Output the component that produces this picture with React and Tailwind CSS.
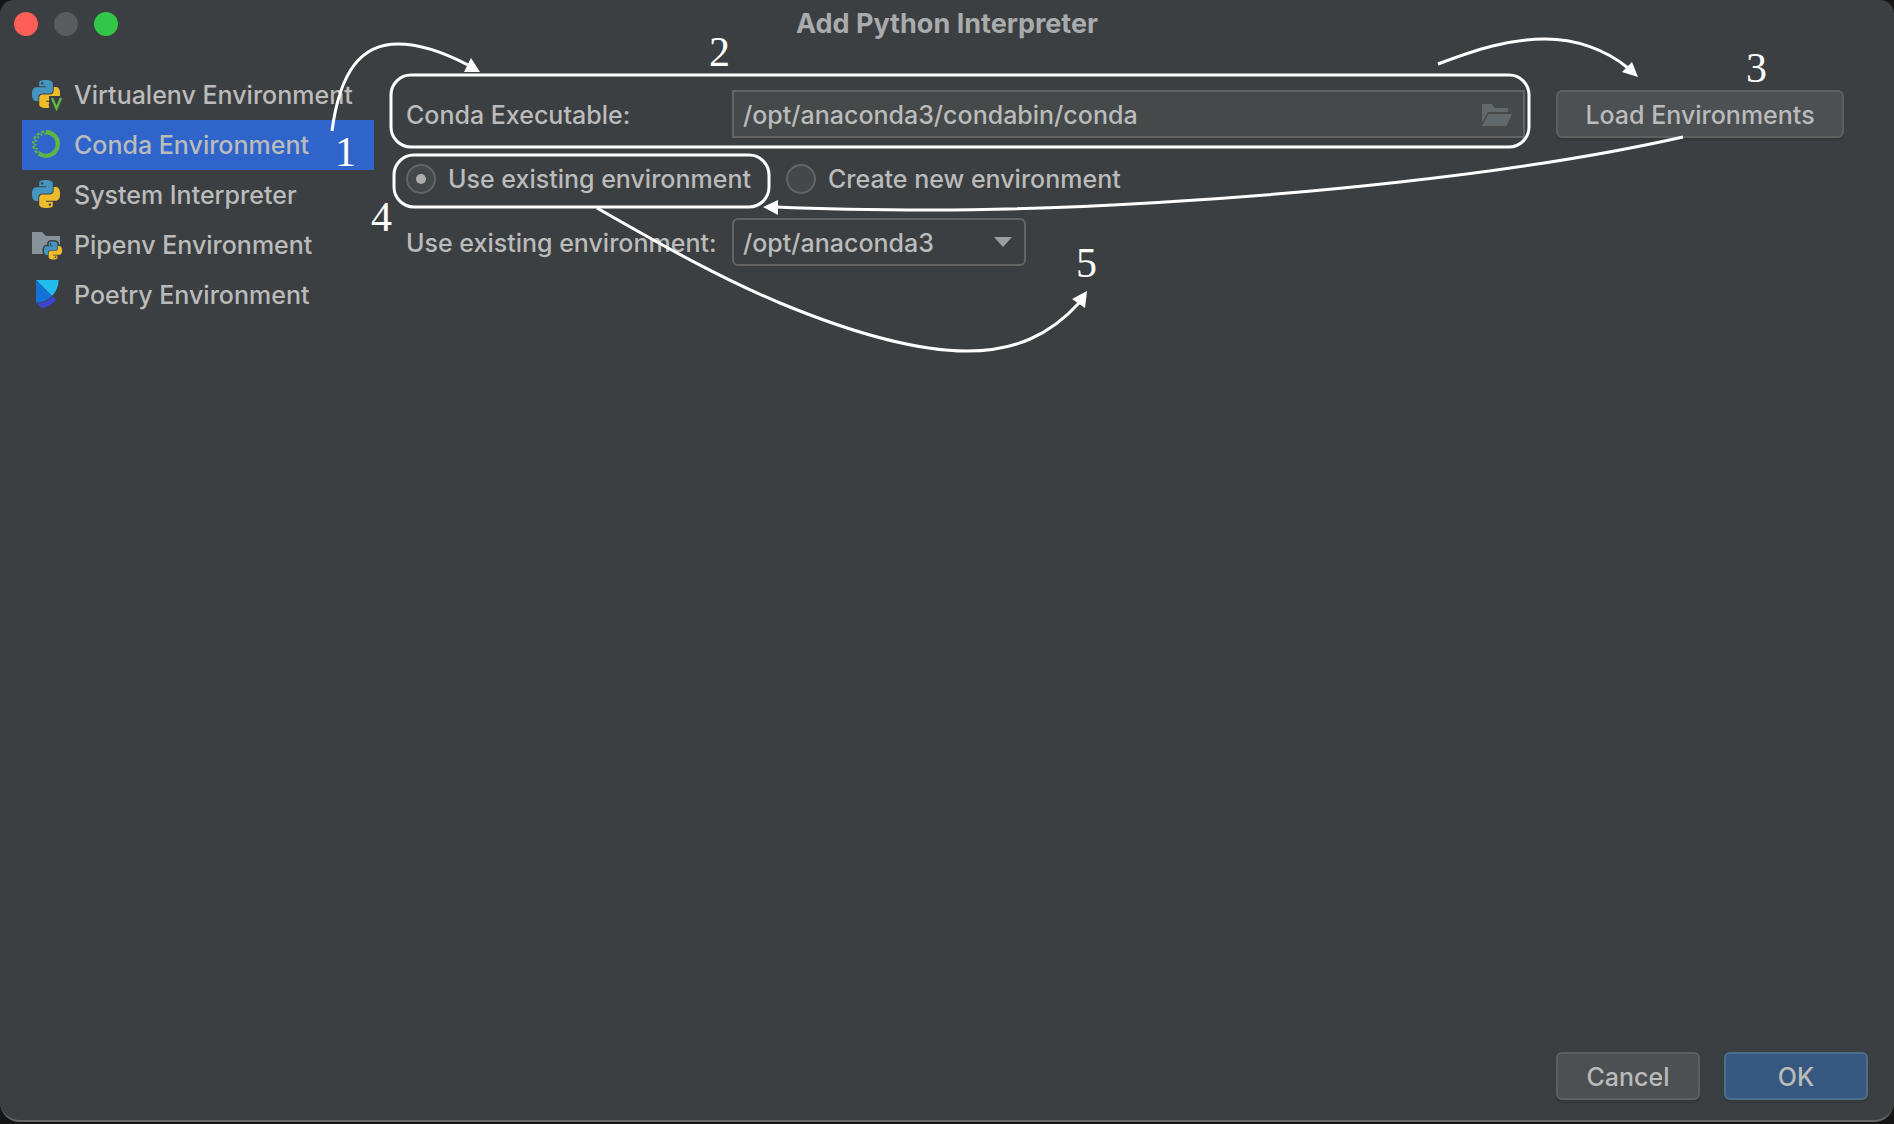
import React from "react";

const PY =
  "M14.25.18l.9.2.73.26.59.3.45.32.34.34.25.34.16.33.1.3.04.26.02.2-.01.13V8.5l-.05.63-.13.55-.21.46-.26.38-.3.31-.33.25-.35.19-.35.14-.33.1-.3.07-.26.04-.21.02H8.77l-.69.05-.59.14-.5.22-.41.27-.33.32-.27.35-.2.36-.15.37-.1.35-.07.32-.04.27-.02.21v3.06H3.17l-.21-.03-.28-.07-.32-.12-.35-.18-.36-.26-.36-.36-.35-.46-.32-.59-.28-.73-.21-.88-.14-1.05-.05-1.23.06-1.22.16-1.04.24-.87.32-.71.36-.57.4-.44.42-.33.42-.24.4-.16.36-.1.32-.05.24-.01h.16l.06.01h8.16v-.83H6.18l-.01-2.75-.02-.37.05-.34.11-.31.17-.28.25-.26.31-.23.38-.2.44-.18.51-.15.58-.12.64-.1.71-.06.77-.04.84-.02 1.27.05zm-6.3 1.98l-.23.33-.08.41.08.41.23.34.33.22.41.09.41-.09.33-.22.23-.34.08-.41-.08-.41-.23-.33-.33-.22-.41-.09-.41.09z";

function Snake() {
  return (
    <>
      <path d={PY} fill="#4595c1" />
      <path d={PY} fill="#ecbc2c" transform="rotate(180 12 12)" />
    </>
  );
}

function PythonIcon() {
  return (
    <svg className="size-8 shrink-0" viewBox="0 0 32 32" aria-hidden="true">
      <g transform="translate(0 1) scale(1.167)">
        <Snake />
      </g>
    </svg>
  );
}

function VirtualenvIcon() {
  return (
    <svg className="size-8 shrink-0" viewBox="0 0 32 32" aria-hidden="true">
      <defs>
        <clipPath id="venv-cut">
          <path d="M0 0H32V17H17V32H0Z" />
        </clipPath>
      </defs>
      <g clipPath="url(#venv-cut)">
        <g transform="translate(0 1) scale(1.167)">
          <Snake />
        </g>
      </g>
      <path d="M20 19L24.500 29.500L29 19" fill="none" stroke="#62b543" strokeWidth="2.400" />
    </svg>
  );
}

function CondaIcon() {
  return (
    <svg className="size-8 shrink-0" viewBox="0 0 32 32" aria-hidden="true">
      <defs>
        <clipPath id="conda-left">
          <path d="M0 0H14V8L8 24V28H0Z" />
        </clipPath>
      </defs>
      <g transform="translate(0 -1)">
        <path d="M14 4.200A11.800 11.800 0 1 1 7 25.500" fill="none" stroke="#62b543" strokeWidth="4.400" />
        <g fill="none" stroke="#62b543" clipPath="url(#conda-left)">
          <circle cx="14" cy="16" r="12.700" strokeWidth="2.400" strokeDasharray="3 2" pathLength="80" />
          <circle cx="14" cy="16" r="10.300" strokeWidth="2.400" strokeDasharray="2 3" strokeDashoffset="-3" pathLength="80" />
        </g>
      </g>
    </svg>
  );
}

function PipenvIcon() {
  return (
    <svg className="size-8 shrink-0" viewBox="0 0 32 32" aria-hidden="true">
      <path d="M0 3H10L14 7H28V25H0Z" fill="#87939a" />
      <g transform="translate(12 12.500) scale(.75)">
        <g stroke="#3c3f41" strokeWidth="4" strokeLinejoin="round">
          <path d={PY} />
          <path d={PY} transform="rotate(180 12 12)" />
        </g>
        <Snake />
      </g>
    </svg>
  );
}

function PoetryIcon() {
  return (
    <svg className="size-8 shrink-0" viewBox="0 0 32 32" aria-hidden="true">
      <path d="M4 1H26.500C26.500 7.500 24 12.800 20 17Z" fill="#22bdef" />
      <path d="M4 1L20 17C16 21 10.500 23.500 4 23.500Z" fill="#1173d8" />
      <path d="M4.500 24.300C11 24 16.500 21.500 20.800 17.400L24 21C20 25.500 15 28.500 9.500 29Z" fill="#3b43cf" />
    </svg>
  );
}

const items = [
  ["Virtualenv Environment", VirtualenvIcon],
  ["Conda Environment", CondaIcon],
  ["System Interpreter", PythonIcon],
  ["Pipenv Environment", PipenvIcon],
  ["Poetry Environment", PoetryIcon],
];

function Radio({ id, label, checked }) {
  return (
    <label htmlFor={id} className="flex items-center gap-3">
      <input
        id={id}
        type="radio"
        name="mode"
        defaultChecked={checked}
        className="grid size-[30px] shrink-0 appearance-none place-items-center rounded-full border-2 border-[#646464] bg-[#43494a] before:size-[10px] before:rounded-full checked:before:bg-[#adadad]"
      />
      {label}
    </label>
  );
}

function Annotations() {
  return (
    <div className="pointer-events-none absolute inset-0 overflow-hidden font-['Liberation_Serif',serif] text-[42px] leading-[42px] font-normal text-white">
      <svg className="absolute left-0 top-0" width="1894" height="400" aria-hidden="true">
        <g fill="none" stroke="#fff" strokeWidth="3">
          <rect x="391" y="75" width="1138" height="72" rx="20" />
          <rect x="394" y="155" width="375" height="52" rx="20" />
          <path d="M332 131C340 70 362 44 398 44C422 44 447 54 468 65" />
          <path d="M1438 64C1475 50 1508 39 1545 39C1575 39 1605 49 1628 68" />
          <path d="M1683 137C1590 158 1490 172 1400 182C1240 200 1060 210 930 210C880 210 820 209 776 207" />
          <path d="M597 208C670 250 725 280 780 303C850 332 915 351 967 351C1015 351 1050 335 1079 303" />
        </g>
        <g fill="#fff">
          <path d="M464 72L471 58L480 72Z" />
          <path d="M1622 72L1632 62L1638 77Z" />
          <path d="M763 207L778 200V215Z" />
          <path d="M1072 299L1087 291L1085 308Z" />
        </g>
      </svg>
      <span className="absolute left-[335px] top-[131px]">1</span>
      <span className="absolute left-[709px] top-[31px]">2</span>
      <span className="absolute left-[1746px] top-[47px]">3</span>
      <span className="absolute left-[371px] top-[196px]">4</span>
      <span className="absolute left-[1076px] top-[242px]">5</span>
    </div>
  );
}

const button =
  "h-12 rounded-md border-2 pt-0.5 text-center shadow-[0_3px_1px_#36393a]";

export default function App() {
  return (
    <div className="min-h-screen bg-[#151516] pb-[2px] font-[Inter,sans-serif] text-[25px] leading-8 font-medium text-[#bbbbbb]">
      <div className="relative flex min-h-[calc(100vh-2px)] flex-col rounded-t-[14px] rounded-b-[20px] border-b-2 border-[#66686a] bg-[#3c3f41]">
        <header className="grid h-12 grid-cols-[1fr_auto_1fr] items-center px-[14px]">
          <div className="flex gap-4">
            <button aria-label="Close" className="size-6 rounded-full bg-[#ff5f57]" />
            <button aria-label="Minimize" className="size-6 rounded-full bg-[#5a5b5d]" />
            <button aria-label="Zoom" className="size-6 rounded-full bg-[#32c748]" />
          </div>
          <h1 className="text-[27px] font-bold text-[#a9abac]">Add Python Interpreter</h1>
        </header>

        <div className="flex grow pt-[22px] pl-[22px]">
          <nav className="w-[352px] shrink-0">
            {items.map(([name, Icon], i) => (
              <button
                key={name}
                className={
                  i === 1
                    ? "flex h-[50px] w-full items-center gap-[10px] bg-[#2f65ca] pl-[10px] whitespace-nowrap"
                    : "flex h-[50px] w-full items-center gap-[10px] pl-[10px] whitespace-nowrap"
                }
              >
                <Icon />
                {name}
              </button>
            ))}
          </nav>

          <main className="flex grow flex-col gap-4 pt-5 pr-[50px] pl-8">
            <div className="flex items-center">
              <label htmlFor="exe" className="w-[326px] shrink-0 pt-0.5">
                Conda Executable:
              </label>
              <div className="mr-[31px] flex h-12 grow items-center border-2 border-[#646464] bg-[#45494a] pr-[11px]">
                <input
                  id="exe"
                  defaultValue="/opt/anaconda3/condabin/conda"
                  className="h-full min-w-0 grow bg-transparent pt-0.5 pl-[9px] outline-none"
                />
                <button aria-label="Browse" className="shrink-0 pt-0.5">
                  <svg className="h-6 w-[30px]" viewBox="0 0 30 24" fill="#62696d" aria-hidden="true">
                    <path d="M0 1H10L12.500 5H26V9H6L0 20Z" />
                    <path d="M6.500 11H30L24.500 23H0Z" />
                  </svg>
                </button>
              </div>
              <button className={button + " w-[288px] shrink-0 border-[#5e6060] bg-[#4c5052]"}>
                Load Environments
              </button>
            </div>

            <div className="flex h-12 items-center gap-[35px] pt-0.5">
              <Radio id="existing" label="Use existing environment" checked />
              <Radio id="create" label="Create new environment" />
            </div>

            <div className="flex items-center">
              <label htmlFor="env" className="w-[326px] shrink-0 pt-0.5 whitespace-nowrap">
                Use existing environment:
              </label>
              <div className="grid w-[294px] items-center">
                <select
                  id="env"
                  className="col-start-1 row-start-1 h-12 w-full appearance-none rounded-md border-2 border-[#646464] bg-[#3c3f41] pt-0.5 pl-[9px] outline-none"
                >
                  <option>/opt/anaconda3</option>
                </select>
                <svg
                  className="pointer-events-none col-start-1 row-start-1 mr-[14px] h-[10px] w-[18px] justify-self-end"
                  viewBox="0 0 18 10"
                  aria-hidden="true"
                >
                  <path d="M0 0H18L9 10Z" fill="#9a9da1" />
                </svg>
              </div>
            </div>
          </main>
        </div>

        <footer className="flex justify-end gap-6 pr-[26px] pb-5">
          <button className={button + " w-36 border-[#5e6060] bg-[#4c5052]"}>Cancel</button>
          <button className={button + " w-36 border-[#4c708c] bg-[#365880]"}>OK</button>
        </footer>
        <Annotations />
      </div>
    </div>
  );
}
